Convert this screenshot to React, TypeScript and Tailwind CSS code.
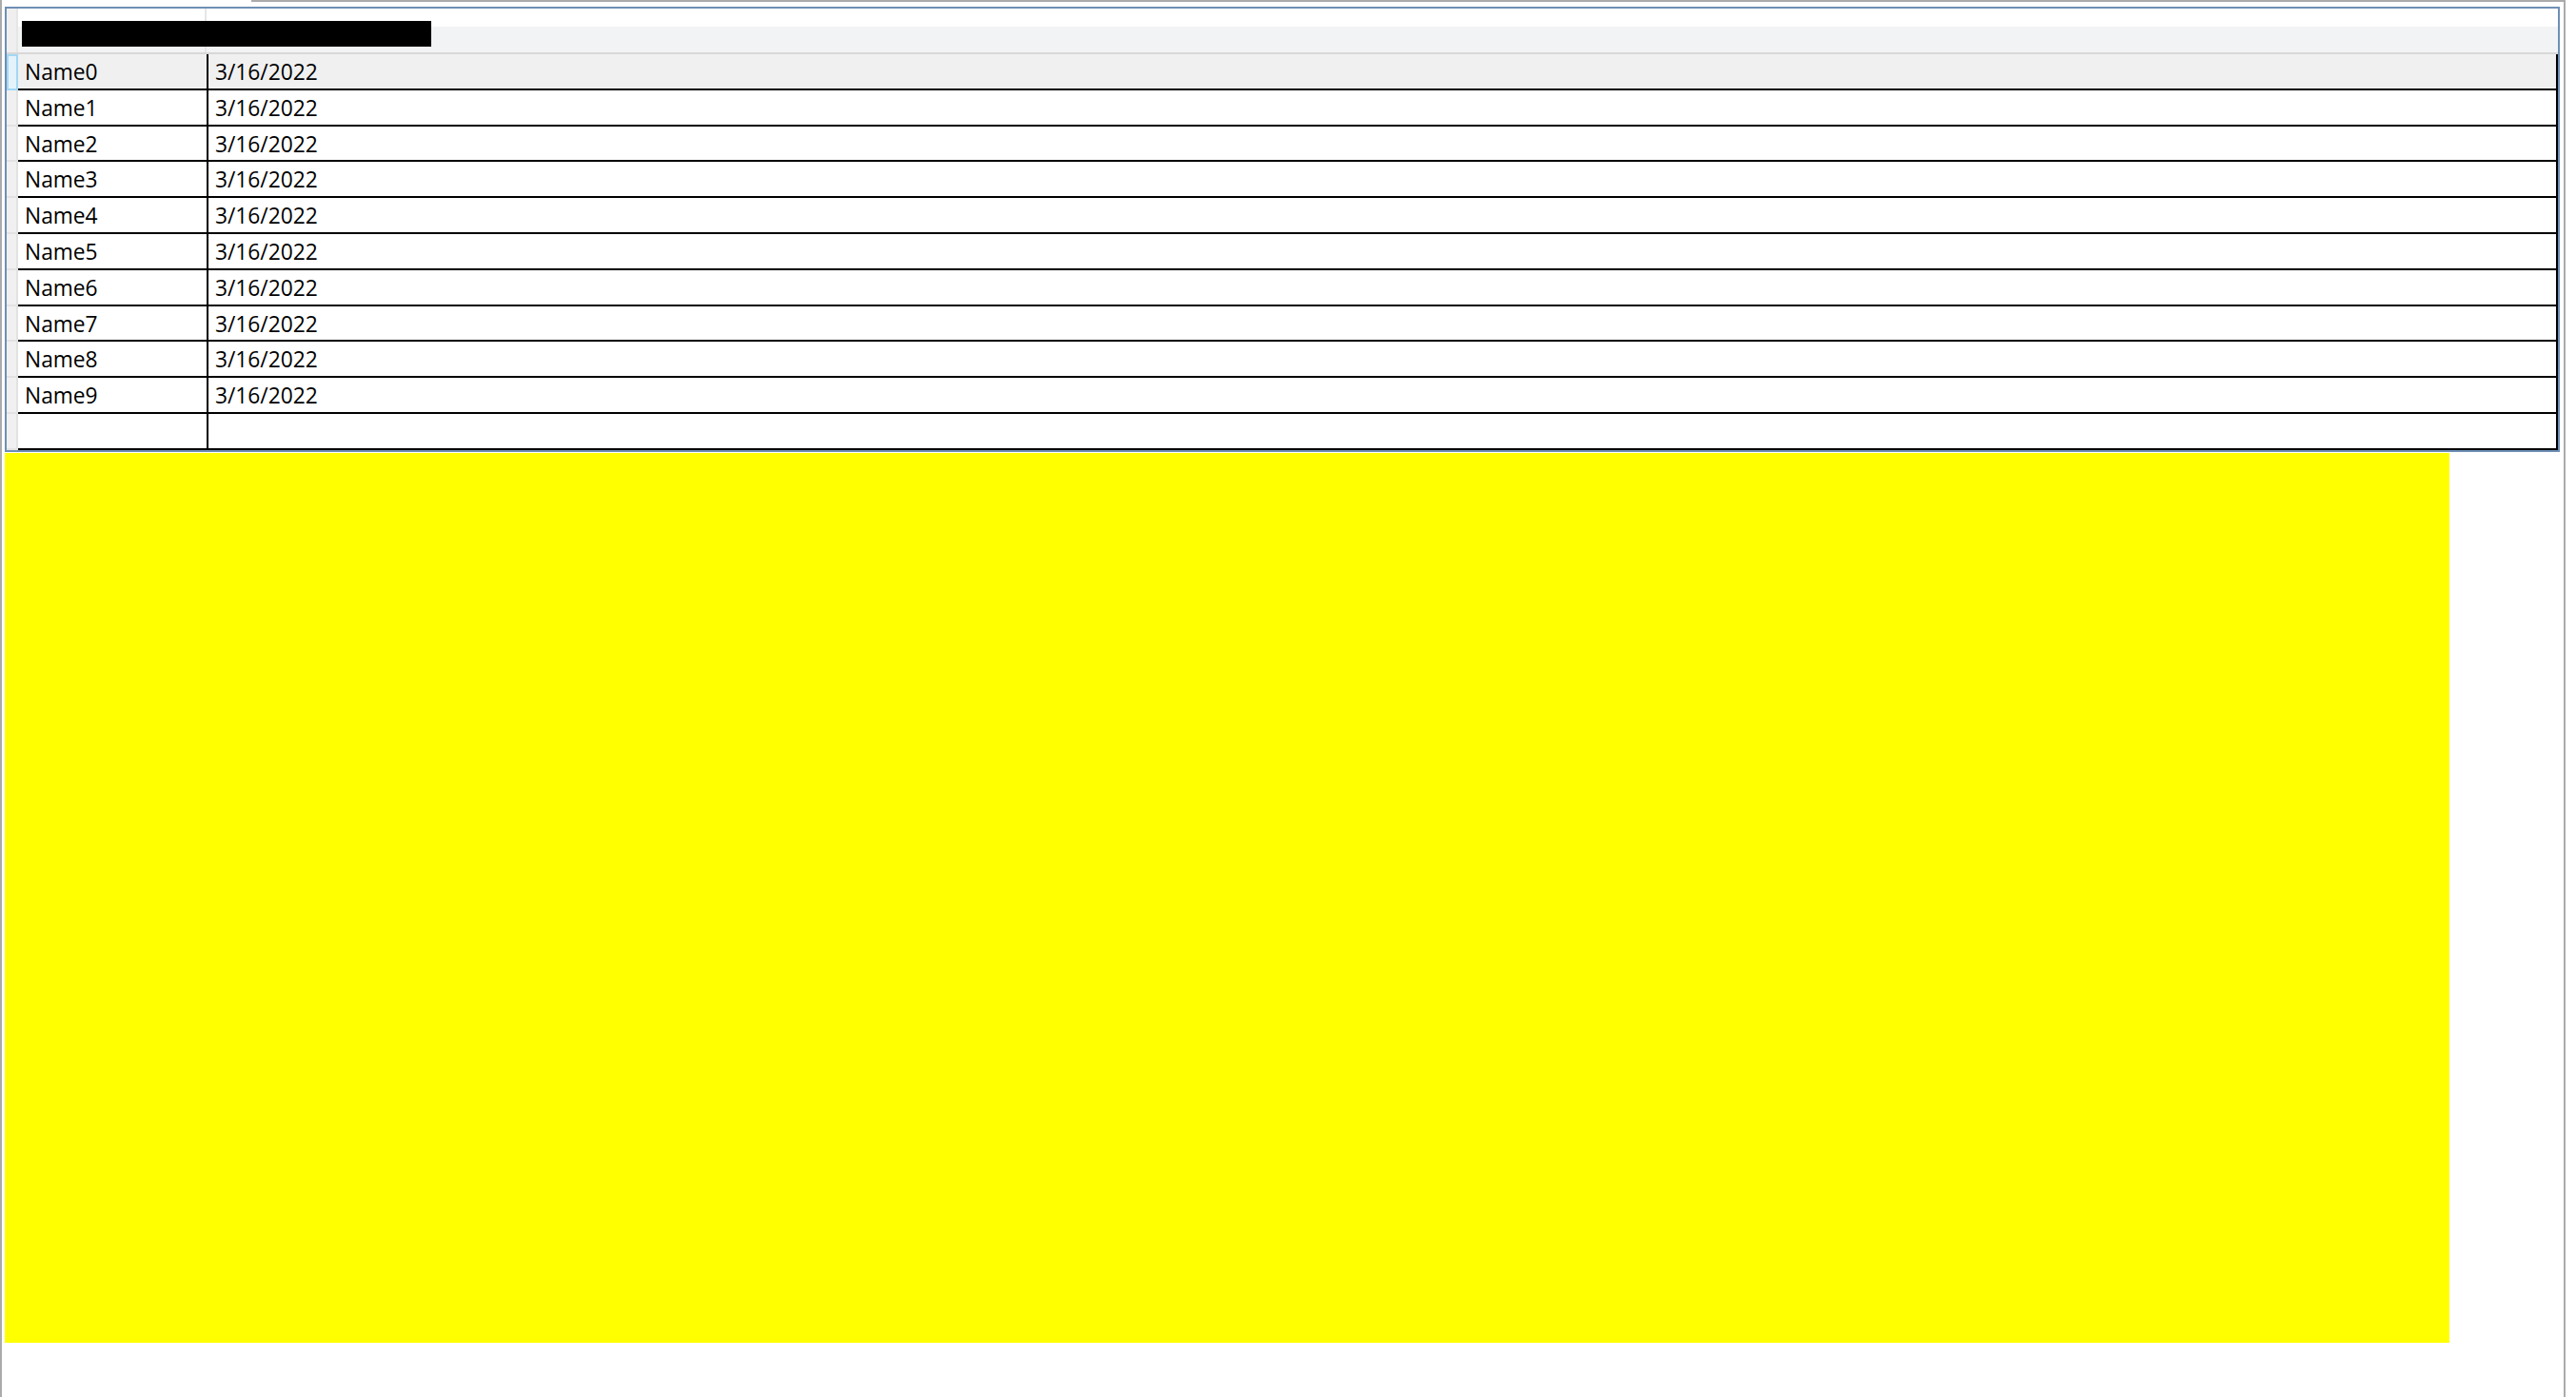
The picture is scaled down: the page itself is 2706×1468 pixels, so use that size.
import React from "react";

const rows = Array.from({ length: 10 }, (_, i) => ({ name: `Name${i}`, date: "3/16/2022" }));

function RowHeader({ selected }: { selected?: boolean }) {
  return selected ? (
    <div className="w-[12px] shrink-0 h-full bg-[#e3f2fb] border-2 border-[#a3d7f4]" />
  ) : (
    <div className="w-[12px] shrink-0 h-full bg-[#f0f0f0] border-b-2 border-r-2 border-[#e2e2e2]" />
  );
}

function DataRow({ name, date, selected }: { name: string; date: string; selected?: boolean }) {
  return (
    <div className="flex h-[37.8px]">
      <RowHeader selected={selected} />
      <div
        className={
          "flex flex-1 border-b-2 border-r-2 border-black " + (selected ? "bg-[#f0f0f0]" : "bg-white")
        }
      >
        <div className="w-[200px] shrink-0 border-r-2 border-black flex items-center pl-[7px] pt-[3px]">{name}</div>
        <div className="flex-1 flex items-center pl-[7px] pt-[3px]">{date}</div>
      </div>
    </div>
  );
}

export default function App() {
  return (
    <div
      className="w-[2706px] h-[1468px] bg-white overflow-hidden text-black text-[22.75px] leading-none"
      style={{ fontFamily: '"Open Sans", "Noto Sans", "Liberation Sans", sans-serif' }}
    >
      <div className="w-[2695px] h-full border-l-2 border-r-2 border-[#ababab] flex flex-col">
        <div className="h-[7px] flex">
          <div className="w-[262px] shrink-0" />
          <div className="flex-1 h-[2px] bg-[#ababab]" />
        </div>
        <div className="ml-[3px] w-[2684px] border-2 border-[#6e8fb4] flex flex-col">
          <div className="relative flex h-[48px] border-b-2 border-[#d8d8d8] bg-[linear-gradient(to_bottom,#ffffff_0px,#ffffff_19px,#f2f3f5_19px,#f2f3f5_100%)]">
            <div className="w-[12px] shrink-0 h-full bg-[#efefef] border-r-2 border-[#e6e6e6]" />
            <div className="w-[198px] shrink-0 h-full border-r-2 border-[#e6e6e6]" />
            <div className="flex-1 h-full" />
            <div className="absolute left-[16px] top-[13px] w-[430px] h-[27px] bg-black" />
          </div>
          {rows.map((r, i) => (
            <DataRow key={r.name} name={r.name} date={r.date} selected={i === 0} />
          ))}
          <DataRow name="" date="" />
        </div>
        <div className="ml-[3px] mt-[1px] w-[2568px] h-[935px] bg-[#ffff00]" />
      </div>
    </div>
  );
}
